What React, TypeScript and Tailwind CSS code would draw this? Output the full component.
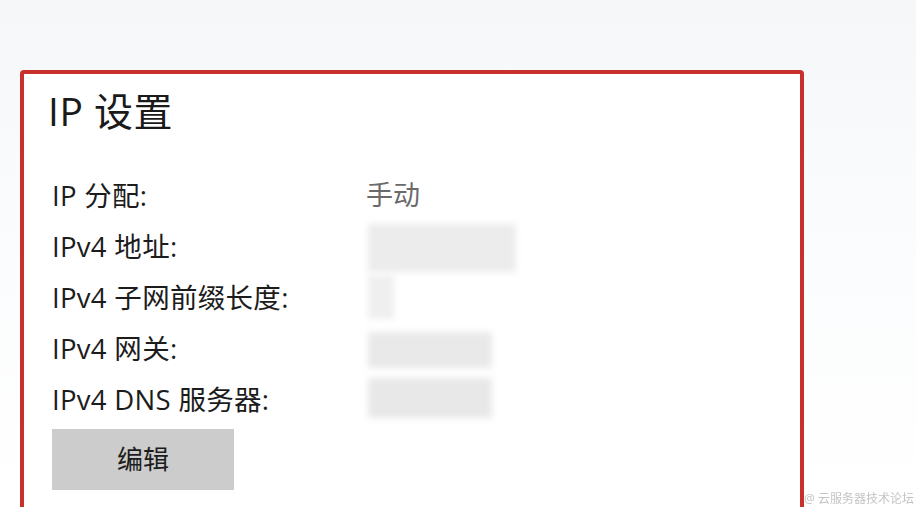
const rows = [
  { label: "IP 分配:", value: "手动", blur: null },
  { label: "IPv4 地址:", value: "", blur: "w-[148px] h-[48px] bg-[#ececec] mt-[2px]" },
  { label: "IPv4 子网前缀长度:", value: "", blur: "w-[26px] h-[44px] bg-[#efefef] -mt-[2px]" },
  { label: "IPv4 网关:", value: "", blur: "w-[124px] h-[36px] bg-[#e9e9e9] mt-[2px]" },
  { label: "IPv4 DNS 服务器:", value: "", blur: "w-[124px] h-[40px] bg-[#e8e8e8] -mt-[4px]" },
]

const font = {
  fontFamily: '"Open Sans", "Noto Sans CJK SC", sans-serif',
}

const App = (): JSX.Element => {
  return (
    <div className="w-[916px] h-[507px] overflow-hidden relative bg-gradient-to-b from-[#f5f7f9] via-[#fbfcfd] to-white" style={font}>
      <div className="pt-[70px] pl-[20px]">
        <div className="w-[784px] h-[460px] border-[4px] border-[#c8302b] rounded-[4px] bg-white pl-[24px] pt-[12px]">
          <h1 className="text-[39px] leading-[50px] text-[#1a1a1a] tracking-[0.5px]">IP 设置</h1>
          <div className="mt-[34px] flex flex-col">
            {rows.map((row, i) => (
              <div key={i} className="flex items-center h-[51px]">
                <div className="w-[316px] pl-[4px] text-[27.5px] text-[#1c1c1c] whitespace-nowrap tracking-[0.3px]">{row.label}</div>
                {row.blur ? (
                  <div className={`${row.blur} ml-[4px] blur-[3px]`} />
                ) : (
                  <div className="ml-[2px] text-[27px] text-[#6a6a6a]">{row.value}</div>
                )}
              </div>
            ))}
          </div>
          <button className="mt-[4px] ml-[4px] w-[182px] h-[61px] bg-[#cccccc] text-[26px] text-[#1c1c1c]">编辑</button>
        </div>
      </div>

      <div className="absolute right-[2px] bottom-[1px] text-[12px] leading-[15px] text-[#c4c4c4] blur-[0.4px]">@ 云服务器技术论坛</div>
    </div>
  )
}

export default App
